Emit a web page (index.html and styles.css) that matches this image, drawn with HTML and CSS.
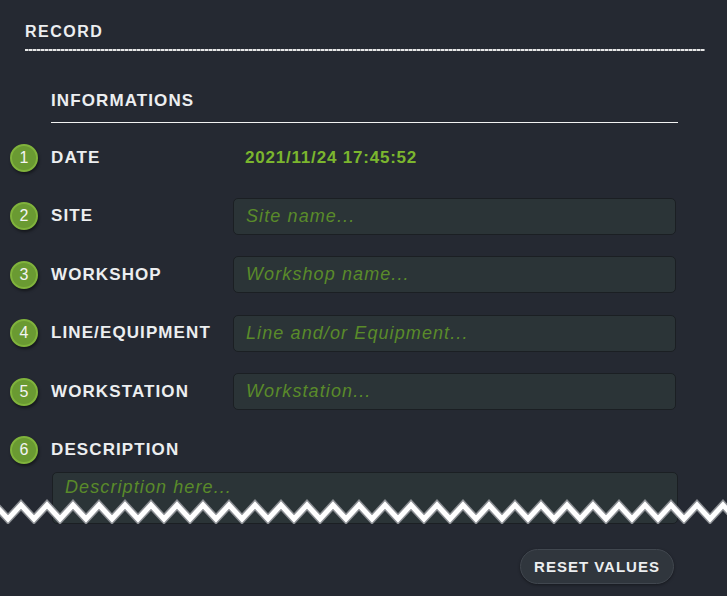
FILE: index.html
```html
<!DOCTYPE html>
<html>
<head>
<meta charset="utf-8">
<link rel="stylesheet" href="styles.css">
</head>
<body>
<div class="page">
  <div class="record">
    <h1 class="record-title">RECORD</h1>
    <div class="record-rule"></div>
  </div>
  <div class="section">
    <h2 class="section-title">INFORMATIONS</h2>
    <div class="rows">
      <div class="row">
        <span class="step">1</span>
        <span class="label">DATE</span>
        <span class="value">2021/11/24 17:45:52</span>
      </div>
      <div class="row">
        <span class="step">2</span>
        <span class="label">SITE</span>
        <div class="field"><span class="ph">Site name...</span></div>
      </div>
      <div class="row">
        <span class="step">3</span>
        <span class="label">WORKSHOP</span>
        <div class="field"><span class="ph">Workshop name...</span></div>
      </div>
      <div class="row">
        <span class="step">4</span>
        <span class="label">LINE/EQUIPMENT</span>
        <div class="field"><span class="ph">Line and/or Equipment...</span></div>
      </div>
      <div class="row">
        <span class="step">5</span>
        <span class="label">WORKSTATION</span>
        <div class="field"><span class="ph">Workstation...</span></div>
      </div>
      <div class="row row-desc">
        <span class="step">6</span>
        <span class="label">DESCRIPTION</span>
      </div>
      <div class="textarea"><span class="ph">Description here...</span></div>
    </div>
  </div>
  <div class="actions">
    <button class="reset">RESET VALUES</button>
  </div>
  <svg class="zigzag" width="727" height="30" viewBox="0 0 727 30">
    <polyline class="zz-edge" points="-5,11 8,25 21,11 34,25 47,11 60,25 73,11 86,25 99,11 112,25 125,11 138,25 151,11 164,25 177,11 190,25 203,11 216,25 229,11 242,25 255,11 268,25 281,11 294,25 307,11 320,25 333,11 346,25 359,11 372,25 385,11 398,25 411,11 424,25 437,11 450,25 463,11 476,25 489,11 502,25 515,11 528,25 541,11 554,25 567,11 580,25 593,11 606,25 619,11 632,25 645,11 658,25 671,11 684,25 697,11 710,25 723,11 736,25"/>
    <polyline class="zz-line" points="-5,11 8,25 21,11 34,25 47,11 60,25 73,11 86,25 99,11 112,25 125,11 138,25 151,11 164,25 177,11 190,25 203,11 216,25 229,11 242,25 255,11 268,25 281,11 294,25 307,11 320,25 333,11 346,25 359,11 372,25 385,11 398,25 411,11 424,25 437,11 450,25 463,11 476,25 489,11 502,25 515,11 528,25 541,11 554,25 567,11 580,25 593,11 606,25 619,11 632,25 645,11 658,25 671,11 684,25 697,11 710,25 723,11 736,25"/>
  </svg>
</div>
</body>
</html>
```

FILE: styles.css
```css
* { box-sizing: border-box; }
html, body {
  margin: 0;
  padding: 0;
  background: #252932;
  width: 727px;
  height: 596px;
  overflow: hidden;
}
.page {
  position: relative;
  width: 727px;
  height: 596px;
  font-family: "Liberation Sans", Arial, sans-serif;
  color: #eceef0;
}
.record {
  padding: 22px 22px 0 25px;
}
.record-title {
  margin: 0;
  font-size: 16px;
  line-height: 20px;
  font-weight: bold;
  letter-spacing: 1.5px;
  color: #eceef0;
}
.record-rule {
  margin-top: 7px;
  height: 2px;
  background: repeating-linear-gradient(90deg, #e6e6e6 0 3px, #8d9096 3px 4px);
}
.section {
  padding: 40px 49px 0 10px;
}
.section-title {
  margin: 0 0 0 41px;
  font-size: 17px;
  line-height: 20px;
  font-weight: bold;
  letter-spacing: 1.1px;
  padding-bottom: 11px;
  border-bottom: 1.5px solid #f2f2f2;
  color: #eceef0;
}
.rows {
  display: flex;
  flex-direction: column;
  gap: 21.6px;
  margin-top: 16px;
}
.row {
  display: flex;
  align-items: center;
  height: 37px;
}
.step {
  flex: none;
  width: 28px;
  height: 28px;
  border-radius: 50%;
  background: #6a9a32;
  border: 2px solid #80b33c;
  box-shadow: 1px 2px 3px rgba(0,0,0,0.45);
  color: #f4f4f4;
  font-size: 16px;
  display: flex;
  align-items: center;
  justify-content: center;
  margin-right: 13px;
}
.label {
  flex: none;
  width: 182px;
  font-size: 17px;
  font-weight: bold;
  letter-spacing: 1.1px;
  color: #eceef0;
}
.value {
  font-size: 17px;
  font-weight: bold;
  letter-spacing: 0.8px;
  color: #7bb62e;
  padding-left: 12px;
}
.field {
  width: 443px;
  height: 37px;
  background: #2b3437;
  border: 1px solid #1b1f23;
  border-radius: 5px;
  display: flex;
  align-items: center;
  padding-left: 12px;
}
.ph {
  font-style: italic;
  font-size: 18px;
  letter-spacing: 1.1px;
  color: #5a8b2a;
}
.row-desc {
  height: 36px;
}
.textarea {
  margin: -18px 0 0 42px;
  height: 52px;
  background: #2b3437;
  border: 1px solid #1b1f23;
  border-radius: 5px;
  padding: 4px 12px;
}
.actions {
  display: flex;
  justify-content: flex-end;
  padding: 25px 53px 0 0;
}
.reset {
  width: 154px;
  height: 35px;
  border-radius: 18px;
  background: #30363d;
  border: 1.5px solid #41474f;
  box-shadow: 0 1px 3px rgba(0,0,0,0.4);
  color: #eceef0;
  font-family: "Liberation Sans", Arial, sans-serif;
  font-weight: bold;
  font-size: 15px;
  letter-spacing: 1px;
  padding: 0;
}
.zigzag {
  position: absolute;
  left: 0;
  top: 494px;
  display: block;
}
.zz-edge {
  fill: none;
  stroke: #8a8d92;
  stroke-width: 8;
  stroke-linejoin: miter;
}
.zz-line {
  fill: none;
  stroke: #ffffff;
  stroke-width: 5;
  stroke-linejoin: miter;
}
```
